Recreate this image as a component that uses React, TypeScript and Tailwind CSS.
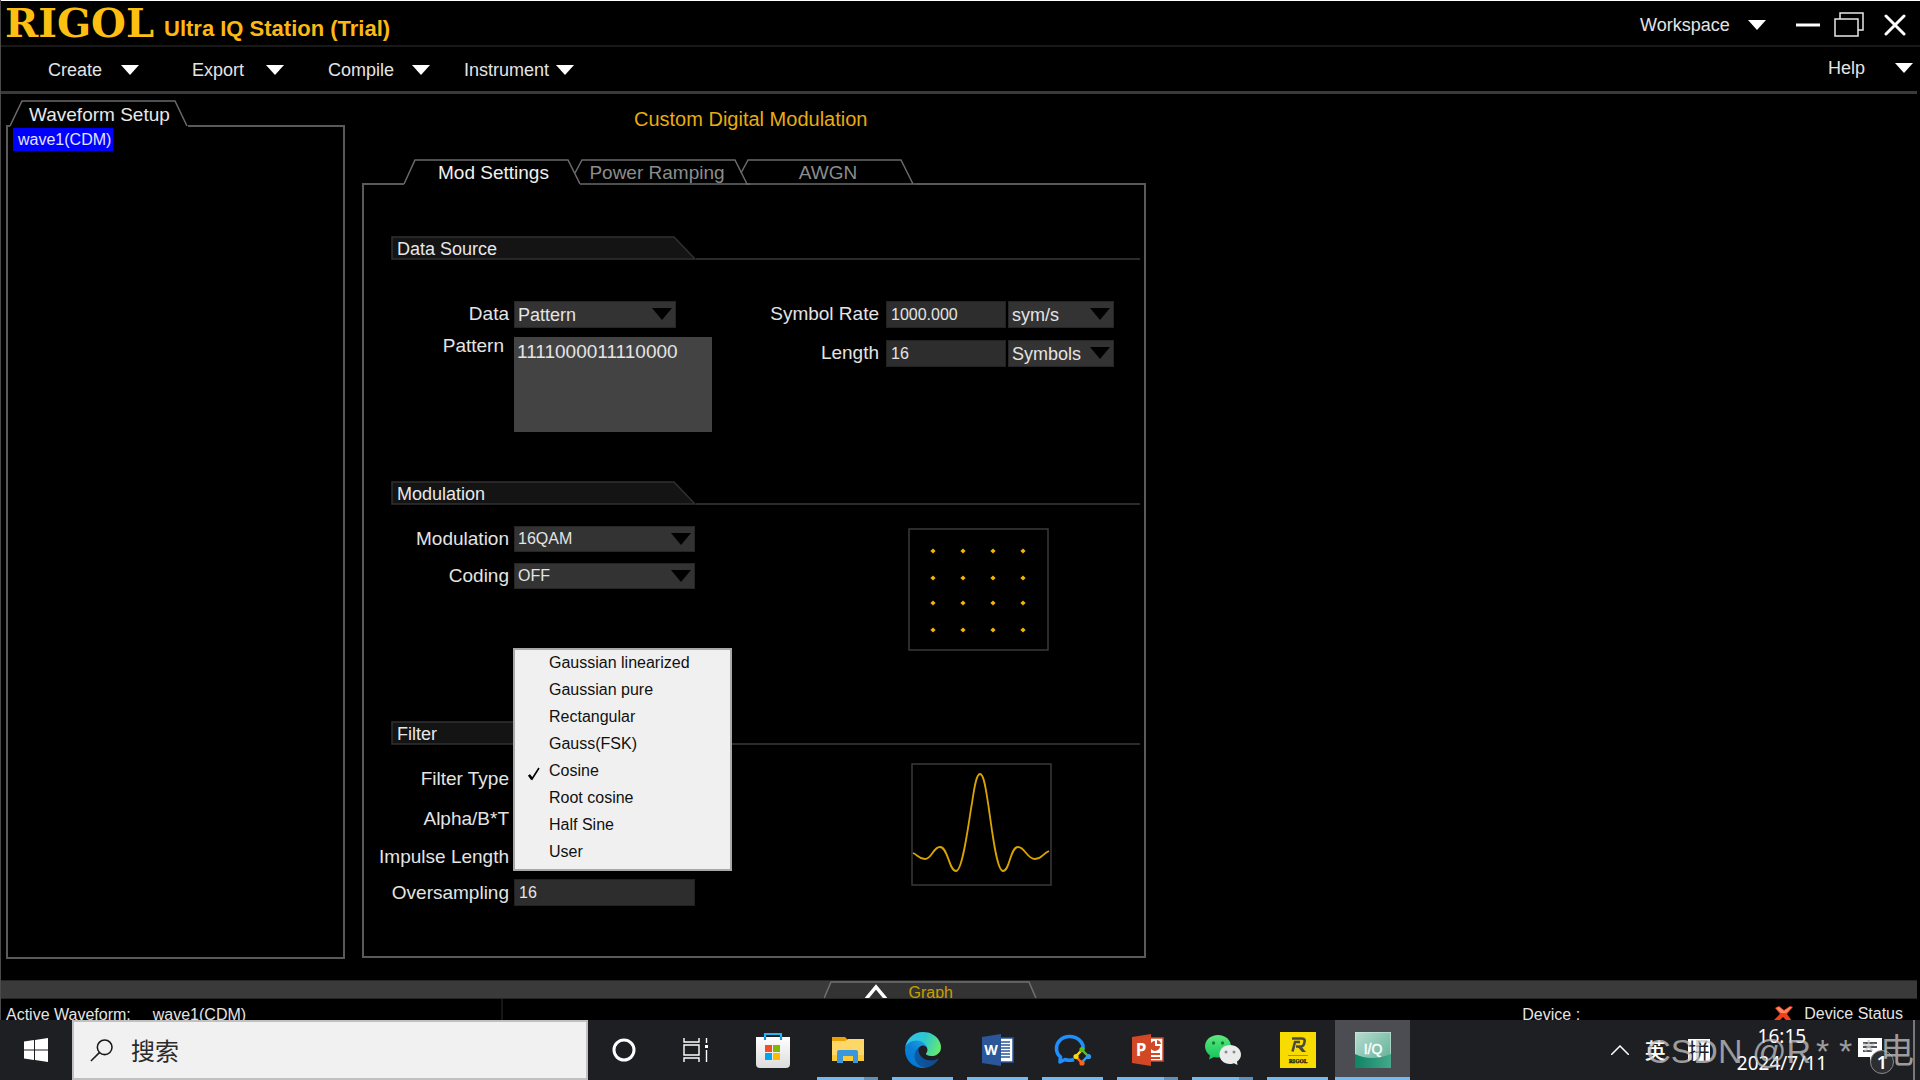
import React from "react";

const CJK = "font-['Noto_Sans','Noto_Sans_CJK_SC',sans-serif]";

function Triangle({ className }: { className: string }) {
  return (
    <svg viewBox="0 0 18 10" preserveAspectRatio="none" className={className} aria-hidden="true">
      <path d="M0 0H18L9 10Z" fill="currentColor" />
    </svg>
  );
}

function MenuButton({ label, className }: { label: string; className: string }) {
  return (
    <button type="button" className={`flex items-center justify-between text-[18px] leading-6 text-[#e4e4e4] ${className}`}>
      {label}
      <Triangle className="h-[10px] w-[18px] text-white" />
    </button>
  );
}

function TitleBar() {
  return (
    <header className="flex h-[47px] items-center border-b-2 border-[#191919] border-t border-t-white pl-1 pr-[14px]">
      <span className="w-[151px] font-['DejaVu_Serif',serif] text-[40px] leading-[44px] font-bold text-[#fdbf12]">RIGOL</span>
      <h1 className="ml-2 pt-3 text-[22px] leading-7 font-bold text-[#fdb813]">Ultra IQ Station (Trial)</h1>
      <div className="ml-auto flex items-center pt-1">
        <MenuButton label="Workspace" className="w-[126px]" />
        <button type="button" aria-label="Minimize" className="ml-[26px] p-1">
          <svg width="24" height="24" viewBox="0 0 24 24">
            <path d="M0 12H24" stroke="#fff" strokeWidth="3" />
          </svg>
        </button>
        <button type="button" aria-label="Restore" className="ml-[6px] p-1">
          <svg width="30" height="26" viewBox="0 0 30 26" fill="none" stroke="#e8e8e8" strokeWidth="1.5">
            <path d="M6 7V1H29V18H24" />
            <rect x="1" y="7" width="23" height="17" />
          </svg>
        </button>
        <button type="button" aria-label="Close" className="ml-3 pl-1">
          <svg width="22" height="22" viewBox="0 0 22 22">
            <path d="M2 2L20 20M20 2L2 20" stroke="#fff" strokeWidth="3" strokeLinecap="round" />
          </svg>
        </button>
      </div>
    </header>
  );
}

function MenuBar() {
  return (
    <nav className="mr-[3px] flex h-[47px] items-center border-b-[3px] border-[#3a3a3a] pl-[47px] pr-1 pt-[2px]">
      <MenuButton label="Create" className="w-[91px]" />
      <MenuButton label="Export" className="ml-[53px] w-[92px]" />
      <MenuButton label="Compile" className="ml-[44px] w-[102px]" />
      <MenuButton label="Instrument" className="ml-[34px] w-[110px]" />
      <MenuButton label="Help" className="ml-auto w-[85px] pb-1" />
    </nav>
  );
}

function Tab({ label, active, shape, className }: { label: string; active?: boolean; shape: string; className: string }) {
  return (
    <button
      type="button"
      role="tab"
      aria-selected={!!active}
      className={`relative h-[26px] w-[176px] pt-[2px] text-[19px] leading-6 ${active ? "text-[#f0f0f0]" : "text-[#8c8c8c]"} ${className}`}
    >
      <svg className="absolute inset-0 h-full w-full" viewBox="0 0 176 26" fill="none" stroke="#6a6a6a" strokeWidth="1.5" aria-hidden="true">
        <path d={shape} />
      </svg>
      <span className="relative">{label}</span>
    </button>
  );
}

function WaveformPanel() {
  return (
    <aside className="mb-[21px] ml-[5px] mt-[6px] flex w-[339px] flex-col">
      <div className="flex">
        <div className="w-1 border-b-2 border-[#5a5a5a]" />
        <div className="relative h-[27px] w-[178px] pl-[19px] text-[19px] leading-[29px] text-[#e8e8e8]">
          <svg className="absolute inset-0 h-full w-full" viewBox="0 0 178 27" fill="none" stroke="#6a6a6a" strokeWidth="1.5" aria-hidden="true">
            <path d="M0 26L12 1H165L177 26" />
          </svg>
          <h2 className="relative">Waveform Setup</h2>
        </div>
        <div className="flex-1 border-b-2 border-[#5a5a5a]" />
      </div>
      <div className="flex-1 border-x-2 border-b-2 border-[#5a5a5a] pl-[5px] pt-[1px]">
        <button type="button" className="bg-[#0000ff] pl-[5px] pr-[2px] text-[16px] leading-[23px] text-[#e4e4ff]">
          wave1(CDM)
        </button>
      </div>
    </aside>
  );
}

function SectionHeader({ title }: { title: string }) {
  return (
    <div className="ml-[27px] mr-1 flex h-6">
      <div className="relative w-[305px] pl-[6px] text-[18px] leading-[26px] text-[#e8e8e8]">
        <svg className="absolute inset-0 h-full w-full" viewBox="0 0 305 24" fill="#141414" stroke="#303030" strokeWidth="1.5" aria-hidden="true">
          <path d="M1 1H283L304 23H1Z" />
        </svg>
        <h3 className="relative">{title}</h3>
      </div>
      <div className="flex-1 border-b-2 border-[#2b2b2b]" />
    </div>
  );
}

const LABEL = "text-right text-[19px] leading-[26px] text-[#e4e4e4]";

function Select({ id, value, className, width }: { id: string; value: string; className: string; width: string }) {
  return (
    <div className={`relative ${width}`}>
      <select
        id={id}
        aria-label={id}
        defaultValue={value}
        className={`block w-full appearance-none border border-[#262626] bg-[#333333] pb-px pl-[3px] text-[#e4e4e4] outline-none ${className}`}
      >
        <option>{value}</option>
      </select>
      <Triangle className="pointer-events-none absolute right-1 top-[7px] h-3 w-5 text-black" />
    </div>
  );
}

function TextField({ id, value, className }: { id: string; value: string; className: string }) {
  return (
    <input
      id={id}
      defaultValue={value}
      className={`h-[27px] border border-[#222222] bg-[#2d2d2d] pl-1 text-[16px] text-[#e4e4e4] outline-none ${className}`}
    />
  );
}

function DataSource() {
  return (
    <section className="pb-[49px]">
      <SectionHeader title="Data Source" />
      <div className="mt-[41px] flex">
        <div className="grid grid-cols-[145px_198px] gap-x-[5px] gap-y-[9px]">
          <label htmlFor="data" className={LABEL}>Data</label>
          <Select id="data" value="Pattern" className="h-[27px] text-[18px]" width="w-[162px]" />
          <label htmlFor="pattern" className={`${LABEL} -mt-1 pr-[5px]`}>Pattern</label>
          <textarea
            id="pattern"
            defaultValue="1111000011110000"
            className="block h-[95px] w-full resize-none bg-[#434343] py-[3px] pl-[3px] text-[19px] leading-6 text-[#e4e4e4] outline-none"
          />
        </div>
        <div className="grid grid-cols-[172px_120px_106px] content-start gap-x-[2px] gap-y-3">
          <label htmlFor="rate" className={`${LABEL} pr-[5px]`}>Symbol Rate</label>
          <TextField id="rate" value="1000.000" className="w-full" />
          <Select id="rate unit" value="sym/s" className="h-[27px] text-[18px]" width="w-full" />
          <label htmlFor="length" className={`${LABEL} pr-[5px]`}>Length</label>
          <TextField id="length" value="16" className="w-full" />
          <Select id="length unit" value="Symbols" className="h-[27px] text-[18px]" width="w-full" />
        </div>
      </div>
    </section>
  );
}

function Modulation() {
  return (
    <section className="pb-[70px]">
      <SectionHeader title="Modulation" />
      <div className="mt-[21px] flex">
        <div className="grid grid-cols-[145px_181px] content-start gap-x-[5px] gap-y-[11px]">
          <label htmlFor="modulation" className={LABEL}>Modulation</label>
          <Select id="modulation" value="16QAM" className="h-[26px] text-[16px]" width="w-full" />
          <label htmlFor="coding" className={LABEL}>Coding</label>
          <Select id="coding" value="OFF" className="h-[26px] text-[16px]" width="w-full" />
        </div>
        <svg width="141" height="123" viewBox="0 0 141 123" className="ml-[213px] mt-[2px]" role="img" aria-label="Constellation">
          <rect x="1" y="1" width="139" height="121" fill="none" stroke="#3a3a3a" strokeWidth="1.5" />
          {[23, 50, 75, 102].map((y) =>
            [25, 55, 85, 115].map((x) => (
              <path key={`${x}-${y}`} d={`M${x} ${y - 2.6}L${x + 2.6} ${y}L${x} ${y + 2.6}L${x - 2.6} ${y}Z`} fill="#f5b400" />
            )),
          )}
        </svg>
      </div>
    </section>
  );
}

const FILTERS = [
  "Gaussian linearized",
  "Gaussian pure",
  "Rectangular",
  "Gauss(FSK)",
  "Cosine",
  "Root cosine",
  "Half Sine",
  "User",
];

function FilterMenu() {
  return (
    <ul
      role="listbox"
      aria-label="Filter Type"
      className="absolute -left-px -top-[119px] z-10 w-[219px] border-2 border-[#a8a8a8] bg-[#f0f0f0] pb-[3px] text-[16px] leading-[25px] text-[#111111]"
    >
      {FILTERS.map((name) => (
        <li key={name} role="option" aria-selected={name === "Cosine"} className="flex h-[27px] items-start">
          <span className="flex w-[34px] justify-end pr-[9px] pt-[9px]">
            {name === "Cosine" && (
              <svg width="12" height="14" viewBox="0 0 12 14" fill="none" stroke="#000" aria-hidden="true">
                <path d="M1 8L4 12L11 1" strokeWidth="1.6" />
                <path d="M1 8L4 12" strokeWidth="2.6" />
              </svg>
            )}
          </span>
          {name}
        </li>
      ))}
    </ul>
  );
}

function Filter() {
  return (
    <section>
      <SectionHeader title="Filter" />
      <div className="mt-[18px] flex">
        <div className="grid grid-cols-[145px_181px] content-start gap-x-[5px] gap-y-3 pt-1">
          <label htmlFor="filter-type" className={`${LABEL} -mt-px`}>Filter Type</label>
          <div className="relative">
            <button id="filter-type" type="button" aria-haspopup="listbox" aria-expanded="true" className="block h-[26px] w-full bg-[#333333] pl-1 text-left text-[16px]">
              Cosine
            </button>
            <FilterMenu />
          </div>
          <label htmlFor="alpha" className={`${LABEL} pt-px`}>Alpha/B*T</label>
          <TextField id="alpha" value="0.5" className="w-full" />
          <label htmlFor="impulse" className={LABEL}>Impulse Length</label>
          <TextField id="impulse" value="8" className="-mt-px w-full" />
          <label htmlFor="oversampling" className={`${LABEL} -mt-[2px]`}>Oversampling</label>
          <TextField id="oversampling" value="16" className="-mt-[3px] w-full" />
        </div>
        <svg width="141" height="123" viewBox="0 0 141 123" className="ml-[216px]" fill="none" role="img" aria-label="Impulse response">
          <rect x="1" y="1" width="139" height="121" stroke="#3a3a3a" strokeWidth="1.5" />
          <path
            d="M2 90C7 92 8 96 14 96C21 96 22 84 29 84C37 84 38 108 45 108C52 108 58 56 61 40C63 27 65 11 69 11C73 11 75 27 77 40C80 58 85 108 92 108C99 108 99 84 107 84C114 84 116 96 124 96C131 96 131 91 138 88"
            stroke="#d9a400"
            strokeWidth="1.8"
          />
        </svg>
      </div>
    </section>
  );
}

function ModulationPanel() {
  return (
    <main className="mb-[22px] ml-[17px] flex w-[784px] flex-col">
      <h2 className="mt-[13px] pl-[272px] text-[20px] leading-6 text-[#e8ac10]">Custom Digital Modulation</h2>
      <div role="tablist" className="mt-[28px] flex">
        <div className="w-[42px] border-b-2 border-[#5a5a5a]" />
        <Tab label="Mod Settings" active shape="M0 25L11 1H164L176 25" className="pl-[3px]" />
        <Tab label="Power Ramping" shape="M1 14L8 1H161L173 25M6 25H176" className="-ml-[6px] pr-[10px]" />
        <Tab label="AWGN" shape="M1 14L8 1H161L173 25M6 25H176" className="-ml-[10px]" />
        <div className="flex-1 border-b-2 border-[#5a5a5a]" />
      </div>
      <div role="tabpanel" className="flex-1 border-x-2 border-b-2 border-[#5a5a5a] pt-[51px]">
        <DataSource />
        <Modulation />
        <Filter />
      </div>
    </main>
  );
}

function GraphBar() {
  return (
    <div className="mr-[3px] flex h-[19px] justify-center overflow-hidden border-y border-[#262626] bg-[#3a3a3a] pr-[57px]">
      <button type="button" className="relative flex h-[22px] w-[214px] items-center pl-[41px] text-[16px] leading-[22px] text-[#c8a000]">
        <svg className="absolute inset-0 h-full w-full" viewBox="0 0 214 22" fill="#333333" stroke="#707070" strokeWidth="1.5" aria-hidden="true">
          <path d="M-2 22L7 1H205L214 22" />
        </svg>
        <svg className="relative" width="22" height="16" viewBox="0 0 22 16" fill="none" stroke="#fff" strokeWidth="3.5" aria-hidden="true">
          <path d="M1 15L11 3L21 15" />
        </svg>
        <span className="relative ml-[22px] pt-[2px]">Graph</span>
      </button>
    </div>
  );
}

function StatusBar() {
  return (
    <footer className="flex h-[21px] overflow-hidden pl-[5px] pr-[17px] text-[16px] leading-6 text-[#e4e4e4]">
      <span className="pt-1">Active Waveform:</span>
      <span className="ml-[22px] w-[350px] border-r-2 border-[#161616] pt-1">wave1(CDM)</span>
      <span className="ml-auto w-[252px] pt-1">Device :</span>
      <svg className="mt-[7px]" width="20" height="16" viewBox="0 0 20 16" aria-hidden="true">
        <path d="M1 2L5 0L10 4L16 0L19 1L13 8L18 15L14 16L9 11L4 16L0 14L6 8Z" fill="#f0401c" />
        <path d="M2 2L5 1L10 5L16 1L18 1L12 7H7Z" fill="#ff8a66" />
      </svg>
      <span className="ml-[10px] pt-[3px]">Device Status</span>
    </footer>
  );
}

function StoreIcon() {
  return (
    <svg width="36" height="36" viewBox="0 0 36 36">
      <defs>
        <linearGradient id="bag" x1="0" y1="0" x2="0" y2="1">
          <stop offset="0" stopColor="#ffffff" />
          <stop offset="1" stopColor="#dcdcdc" />
        </linearGradient>
      </defs>
      <path d="M10 8V2H26V8" fill="none" stroke="#28b4f0" strokeWidth="2.2" />
      <path d="M1 5H35V32Q35 36 31 36H5Q1 36 1 32Z" fill="url(#bag)" />
      <path d="M10 5V8M26 5V8" stroke="#1490df" strokeWidth="2.2" />
      <rect x="10" y="13" width="7" height="7" fill="#f25022" />
      <rect x="18" y="13" width="7" height="7" fill="#7fba00" />
      <rect x="10" y="21" width="7" height="7" fill="#00a4ef" />
      <rect x="18" y="21" width="7" height="7" fill="#ffb900" />
    </svg>
  );
}

function FolderIcon() {
  return (
    <svg width="36" height="36" viewBox="0 0 36 36">
      <path d="M2 5H15L17 7V12H2Z" fill="#e8a208" />
      <path d="M2 9H15L18 7H34V29H2Z" fill="#ffd766" />
      <path d="M2 23H34V29H2Z" fill="#fcc937" />
      <path d="M7 31V20Q7 18 9 18H26Q28 18 28 20V31H23V24H13V31Z" fill="#3a96dd" />
    </svg>
  );
}

function EdgeIcon() {
  return (
    <svg width="36" height="36" viewBox="0 0 256 256">
      <defs>
        <linearGradient id="edgeA" x1="0.1" y1="0.5" x2="1" y2="0.6">
          <stop offset="0" stopColor="#0c59a4" />
          <stop offset="1" stopColor="#114a8b" />
        </linearGradient>
        <linearGradient id="edgeB" x1="0.9" y1="0.2" x2="0.3" y2="1">
          <stop offset="0" stopColor="#1b9de2" />
          <stop offset="0.5" stopColor="#0a7fd4" />
          <stop offset="1" stopColor="#0078d4" />
        </linearGradient>
        <linearGradient id="edgeC" x1="0" y1="0.3" x2="1" y2="0.6">
          <stop offset="0" stopColor="#35c1f1" />
          <stop offset="0.5" stopColor="#2cc7cf" />
          <stop offset="1" stopColor="#66eb6e" />
        </linearGradient>
      </defs>
      <g transform="translate(-4.63 -4.92)">
        <path fill="url(#edgeA)" d="M235.68 195.46a93.73 93.73 0 0 1-10.54 4.71 101.87 101.87 0 0 1-35.9 6.46c-47.32 0-88.54-32.55-88.54-74.32A31.48 31.48 0 0 1 117.13 105c-42.8 1.8-53.8 46.4-53.8 72.53 0 73.88 68.09 81.37 82.76 81.37 7.91 0 19.84-2.3 27-4.56l1.31-.44a128.34 128.34 0 0 0 66.6-52.8 4 4 0 0 0-5.32-5.64Z" />
        <path fill="url(#edgeB)" d="M110.34 246.34A79.2 79.2 0 0 1 87.6 225a80.72 80.72 0 0 1 29.53-120c3.12-1.47 8.45-4.13 15.54-4a32.35 32.35 0 0 1 25.69 13 31.88 31.88 0 0 1 6.36 18.66c0-.21 24.46-79.6-80-79.6-43.9 0-80 41.66-80 78.21a130.15 130.15 0 0 0 12.11 56 128 128 0 0 0 156.38 67.11 75.55 75.55 0 0 1-62.78-8Z" />
        <path fill="url(#edgeC)" d="M156.94 153.78c-.81 1.05-3.3 2.5-3.3 5.66 0 2.61 1.7 5.12 4.72 7.23 14.38 10 41.49 8.68 41.56 8.68a59.56 59.56 0 0 0 30.27-8.35 61.38 61.38 0 0 0 30.43-52.88c.26-22.41-8-37.31-11.34-43.91C228.09 28.76 182.35 5 132.6 5a128 128 0 0 0-128 126.2c.48-36.54 36.8-66.05 80-66.05 3.5 0 23.46.34 42 10.07 16.34 8.58 24.9 18.94 30.85 29.21 6.18 10.67 7.28 24.15 7.28 29.52s-2.74 13.33-7.79 19.83Z" />
      </g>
    </svg>
  );
}

function WordIcon() {
  return (
    <svg width="36" height="36" viewBox="0 0 36 36">
      <path d="M19 6H33V30H19Z" fill="#fff" stroke="#2b579a" strokeWidth="1.5" />
      <path d="M21 10H30M21 13H30M21 16H30M21 19H30M21 22H30M21 25H30" stroke="#2b579a" strokeWidth="1.3" />
      <path d="M2 5L21 2V34L2 31Z" fill="#2b579a" />
      <text x="11" y="23" textAnchor="middle" fontSize="14" fontWeight="700" fill="#fff" fontFamily="Open Sans, sans-serif">W</text>
    </svg>
  );
}

function PowerPointIcon() {
  return (
    <svg width="36" height="36" viewBox="0 0 36 36">
      <path d="M19 6H33V29H19Z" fill="#fff" stroke="#d24726" strokeWidth="1.5" />
      <path d="M25 9A5 5 0 1 0 30 14H25Z" fill="#d24726" />
      <path d="M27 8A5 5 0 0 1 31 12H27Z" fill="#d24726" />
      <path d="M21 22H30M21 26H30" stroke="#d24726" strokeWidth="1.8" />
      <path d="M2 5L21 2V34L2 31Z" fill="#d24726" />
      <text x="11" y="24" textAnchor="middle" fontSize="17" fontWeight="700" fill="#fff" fontFamily="Open Sans, sans-serif">P</text>
    </svg>
  );
}

function WeComIcon() {
  return (
    <svg width="38" height="36" viewBox="0 0 38 36">
      <path
        d="M29 17C30 10 23 4.5 15.500 4.5C8 4.5 2.5 10 2.5 16.5C2.5 20 4 23 6.5 25L6 30L11 27.5C14 28.5 17 28.5 20 27.5"
        fill="none"
        stroke="#1f8ffb"
        strokeWidth="3.6"
        strokeLinejoin="round"
      />
      <path d="M28 18L34 24L28 31L22 24Z" fill="#1e1f23" stroke="#f4a51c" strokeWidth="1.4" />
      <path d="M28 18L34 24" stroke="#58c410" strokeWidth="2.4" />
      <path d="M34 24L28 30" stroke="#2b9cf5" strokeWidth="2.4" />
      <path d="M28 31L22 25" stroke="#f9661b" strokeWidth="2.4" />
      <path d="M22 24L28 18" stroke="#fcd414" strokeWidth="2.4" />
      <circle cx="28" cy="17.5" r="2.6" fill="#58c410" />
      <circle cx="34.5" cy="24.5" r="2.6" fill="#2b9cf5" />
      <circle cx="28" cy="31" r="2.6" fill="#f9661b" />
      <circle cx="22" cy="24.5" r="2.6" fill="#fcd414" />
    </svg>
  );
}

function WeChatIcon() {
  return (
    <svg width="38" height="36" viewBox="0 0 38 36">
      <defs>
        <linearGradient id="wx" x1="0" y1="0" x2="0" y2="1">
          <stop offset="0" stopColor="#5ee87c" />
          <stop offset="1" stopColor="#0fc45c" />
        </linearGradient>
      </defs>
      <path d="M14 3C6.5 3 1 8 1 14.5C1 18 3 21.5 6 23.5L5 27.5L10 25C20 27.5 27 21 27 14.5C27 8 21.5 3 14 3Z" fill="url(#wx)" />
      <circle cx="9.5" cy="11" r="1.7" fill="#17803f" />
      <circle cx="18.5" cy="11" r="1.7" fill="#17803f" />
      <path d="M26 13C20 13 15.5 17 15.5 22.5C15.5 28 20 32 26 32C27.5 32 29 31.7 30 31.3L33.5 33L33 29.5C35.5 28 37 25.5 37 22.5C37 17 32 13 26 13Z" fill="#ebebeb" />
      <circle cx="22" cy="20" r="1.5" fill="#8c8c8c" />
      <circle cx="30" cy="20" r="1.5" fill="#8c8c8c" />
    </svg>
  );
}

function RigolIcon() {
  return (
    <svg width="36" height="36" viewBox="0 0 36 36">
      <rect width="36" height="36" fill="#f8dc00" />
      <path d="M12 6.500H22C24.500 6.500 25 8 24.500 10L24 12C23.500 14 22.500 14.500 20.500 14.500H16" fill="none" stroke="#4a4a40" strokeWidth="2.600" />
      <path d="M14 10H20M15 10L12.500 19.500" fill="none" stroke="#4a4a40" strokeWidth="2.600" />
      <path d="M17 14H21L26 20H22Z" fill="#4a4a40" />
      <path d="M8 23.500H28" stroke="#a89400" strokeWidth="1" />
      <text x="18" y="31" textAnchor="middle" fontSize="5" fontWeight="700" fill="#1c1a00" stroke="#1c1a00" strokeWidth="0.3" fontFamily="DejaVu Serif, serif">RIGOL</text>
    </svg>
  );
}

function IqIcon() {
  return (
    <svg width="36" height="36" viewBox="0 0 36 36">
      <defs>
        <linearGradient id="iqTop" x1="0" y1="0" x2="1" y2="1">
          <stop offset="0" stopColor="#b9dccf" />
          <stop offset="1" stopColor="#56ad92" />
        </linearGradient>
        <linearGradient id="iqLow" x1="0" y1="0" x2="1" y2="0">
          <stop offset="0" stopColor="#0d8465" />
          <stop offset="1" stopColor="#45a88a" />
        </linearGradient>
      </defs>
      <rect width="36" height="36" rx="1" fill="url(#iqTop)" stroke="#d8ece4" />
      <path d="M0 22Q16 30 36 22V36H0Z" fill="url(#iqLow)" />
      <text x="18" y="22" textAnchor="middle" fontSize="14" fill="#ffffff" stroke="#ffffff" strokeWidth="0.4" fontFamily="Liberation Sans, sans-serif">I/Q</text>
    </svg>
  );
}

type AppState = "none" | "open" | "many" | "active";

function TaskButton({ label, state, children }: { label: string; state: AppState; children: React.ReactNode }) {
  return (
    <button
      type="button"
      aria-label={label}
      className={`flex h-full w-[75px] flex-col items-center justify-end ${state === "active" ? "bg-[#4c4d52]" : ""}`}
    >
      <span className="mb-[9px] flex h-9 items-center">{children}</span>
      <span className="flex h-[3px] w-full justify-center">
        {state === "active" && <span className="w-full bg-[#76b9ed]" />}
        {state === "open" && <span className="w-[61px] bg-[#76b9ed]" />}
        {state === "many" && (
          <>
            <span className="w-[47px] bg-[#76b9ed]" />
            <span className="w-[14px] bg-[#5f90b8]" />
          </>
        )}
      </span>
    </button>
  );
}

function Taskbar() {
  return (
    <div className="relative flex h-[60px] items-stretch bg-[#1e1f23]">
      <button type="button" aria-label="Start" className="flex w-[72px] items-center justify-center">
        <svg width="24" height="24" viewBox="0 0 24 24" fill="#fff">
          <path d="M0 3.4L10 2V11.5H0ZM11 1.9L24 0V11.5H11ZM0 12.5H10V22L0 20.6ZM11 12.5H24V24L11 22.1Z" />
        </svg>
      </button>
      <label className="flex w-[516px] items-center border-2 border-[#c0c0c0] bg-[#f1f1f1] pl-4">
        <svg width="25" height="25" viewBox="0 0 25 25" fill="none" stroke="#1a1a1a" strokeWidth="1.7" aria-hidden="true">
          <circle cx="16" cy="9" r="8" />
          <path d="M10.5 14.5L1 24" />
        </svg>
        <input
          aria-label="搜索"
          placeholder="搜索"
          className={`ml-[18px] w-full bg-transparent pt-[2px] text-[24px] text-[#222] outline-none placeholder:text-[#2b2b2b] ${CJK}`}
        />
      </label>
      <button type="button" aria-label="Cortana" className="flex w-[72px] items-center justify-center">
        <svg width="24" height="24" viewBox="0 0 24 24">
          <circle cx="12" cy="12" r="10" fill="none" stroke="#fff" strokeWidth="3" />
        </svg>
      </button>
      <button type="button" aria-label="Task view" className="flex w-[75px] items-center justify-center pr-1">
        <svg width="26" height="24" viewBox="0 0 26 24" fill="none" stroke="#fff" strokeWidth="1.4">
          <path d="M1 0V4H16V0M1 24V20H16V24M1 7H16V17H1ZM23.5 0V5M23.5 12V24" />
          <rect x="22" y="7" width="3" height="3" fill="#fff" stroke="none" />
        </svg>
      </button>
      <TaskButton label="Microsoft Store" state="none"><StoreIcon /></TaskButton>
      <TaskButton label="File Explorer" state="many"><FolderIcon /></TaskButton>
      <TaskButton label="Edge" state="open"><EdgeIcon /></TaskButton>
      <TaskButton label="Word" state="open"><WordIcon /></TaskButton>
      <TaskButton label="WeCom" state="open"><WeComIcon /></TaskButton>
      <TaskButton label="PowerPoint" state="many"><PowerPointIcon /></TaskButton>
      <TaskButton label="WeChat" state="many"><WeChatIcon /></TaskButton>
      <TaskButton label="RIGOL" state="open"><RigolIcon /></TaskButton>
      <TaskButton label="Ultra IQ Station" state="active"><IqIcon /></TaskButton>

      <div className={`ml-auto mr-[5px] flex items-center border-r-2 border-[#77787c] text-white ${CJK}`}>
        <button type="button" aria-label="Show hidden icons" className="mr-4">
          <svg width="18" height="10" viewBox="0 0 18 10" fill="none" stroke="#fff" strokeWidth="1.5">
            <path d="M0 10L9 1L18 10" />
          </svg>
        </button>
        <span className="text-[21px] leading-6 font-medium">英</span>
        <span className="ml-[22px] bg-white text-[22px] leading-[22px] text-[#1e1f23]">拼</span>
        <time className="ml-[27px] text-center text-[19px] leading-[27px]">
          16:15
          <br />
          2024/7/11
        </time>
        <button type="button" aria-label="Notifications" className="relative ml-[31px] mr-[31px]">
          <svg width="24" height="24" viewBox="0 0 24 24">
            <path d="M0 0H24V19H16L12 24V19H0Z" fill="#fff" />
            <path d="M5 5H19M5 9H19M5 13H14" stroke="#1e1f23" strokeWidth="1.4" />
          </svg>
          <span className="absolute left-3 top-3 flex h-6 w-6 items-center justify-center rounded-full border border-[#8a8a8a] bg-[#2d2e31] text-[18px] font-semibold">1</span>
        </button>
      </div>

      <div className="pointer-events-none absolute bottom-1 right-[6px] flex items-center font-['Liberation_Sans','Noto_Sans_CJK_SC',sans-serif] text-[34px] leading-[50px] text-[#c6c6c6]/75">
        <span>CSDN @R</span>
        <span className="w-[23px] text-center">*</span>
        <span className="w-[23px] text-center">*</span>
        <span className="w-[23px] text-center">*</span>
        <span>电</span>
      </div>
    </div>
  );
}

export default function App() {
  return (
    <div className="flex min-h-screen flex-col bg-black font-['Liberation_Sans',Arial,sans-serif]">
      <div className="flex flex-1 flex-col border-l border-[#4a4a4a]">
        <TitleBar />
        <MenuBar />
        <div className="flex flex-1">
          <WaveformPanel />
          <ModulationPanel />
        </div>
        <GraphBar />
        <StatusBar />
      </div>
      <Taskbar />
    </div>
  );
}
